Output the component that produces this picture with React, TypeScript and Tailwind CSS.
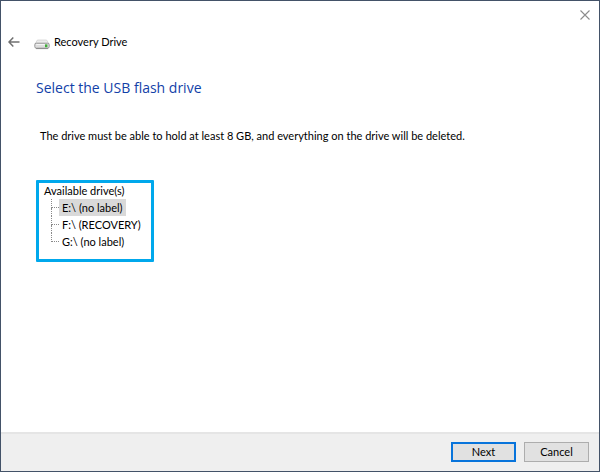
import { useState } from 'react';

const drives = ['E:\\ (no label)', 'F:\\ (RECOVERY)', 'G:\\ (no label)'];

function TitleBar() {
  return (
    <div className="flex h-7 justify-end pr-2">
      <button type="button" aria-label="Close" className="flex w-3 items-center justify-center text-[#8c8c8c]">
        <svg width="10" height="10" viewBox="0 0 10 10" fill="none" stroke="currentColor" strokeWidth="1.1">
          <path d="M0.5 0.5 9.5 9.5M9.5 0.5 0.5 9.5" />
        </svg>
      </button>
    </div>
  );
}

function DriveIcon() {
  return (
    <svg width="16" height="11" viewBox="0 0 16 11" className="mt-1" aria-hidden="true">
      <path d="M3.4 1h9.2l2.4 4H1z" fill="#ececec" stroke="#cfcfcf" strokeWidth=".7" />
      <rect x=".8" y="4.2" width="14.4" height="5" rx="1.5" fill="#dedede" stroke="#8e8e8e" strokeWidth=".9" />
      <path d="M2.3 5.5h8.5" stroke="#f5f5f5" />
      <path d="M2 9.6h12" stroke="#777" strokeWidth=".7" />
      <rect x="11" y="5.4" width="2.4" height="2.8" fill="#3fae3a" />
    </svg>
  );
}

export default function App() {
  const [selected, setSelected] = useState(0);

  return (
    <div className="flex min-h-screen flex-col border border-[#435268] bg-white font-['Lato','Open_Sans',sans-serif] text-[11px] leading-4 text-black">
      <TitleBar />

      <header className="flex h-[26px] items-center pl-[7px]">
        <button type="button" aria-label="Back" className="text-[#707070]">
          <svg width="12" height="12" viewBox="0 0 12 12" fill="none" stroke="currentColor" strokeWidth="1.5">
            <path d="M11.5 6H1M5.3 1.5 1 6l4.3 4.5" />
          </svg>
        </button>
        <div className="flex items-center gap-1 pl-3.5">
          <DriveIcon />
          <span>Recovery Drive</span>
        </div>
      </header>

      <main className="flex-1 px-[35px] pt-[21px]">
        <h1 className="font-['Open_Sans','Noto_Sans',sans-serif] text-[14px] leading-6 text-[#123fa8]">
          Select the USB flash drive
        </h1>
        <p className="mt-7 pl-1">
          The drive must be able to hold at least 8 GB, and everything on the drive will be deleted.
        </p>

        <section className="mt-9 w-[118px] rounded-[1px] border-3 border-[#00a8ec] pb-[9px] pl-[5px]">
          <h2 id="drives" className="leading-4">Available drive(s)</h2>
          <ul role="tree" aria-labelledby="drives" className="pl-[7px]">
            {drives.map((drive, i) => (
              <li key={drive} role="none" className="flex h-[17px]">
                <div className="flex h-full w-2 flex-col">
                  <div className="h-[9px] border-b border-l border-dotted border-[#8a8a8a]" />
                  {i < drives.length - 1 && <div className="flex-1 border-l border-dotted border-[#8a8a8a]" />}
                </div>
                <button
                  type="button"
                  role="treeitem"
                  aria-selected={selected === i}
                  onClick={() => setSelected(i)}
                  className={`px-[3px] leading-4 whitespace-nowrap ${selected === i ? 'bg-[#d9d9d9]' : ''}`}
                >
                  {drive}
                </button>
              </li>
            ))}
          </ul>
        </section>
      </main>

      <footer className="flex justify-end gap-2 border-t-2 border-[#e5e5e5] bg-[#efefef] px-2.5 pt-2 pb-[9px]">
        <button type="button" className="h-5 w-[65px] border-2 border-[#0874db] bg-[#e1e1e1] leading-4">
          Next
        </button>
        <button type="button" className="h-5 w-[65px] border border-[#adadad] bg-[#e1e1e1] leading-4">
          Cancel
        </button>
      </footer>
    </div>
  );
}
